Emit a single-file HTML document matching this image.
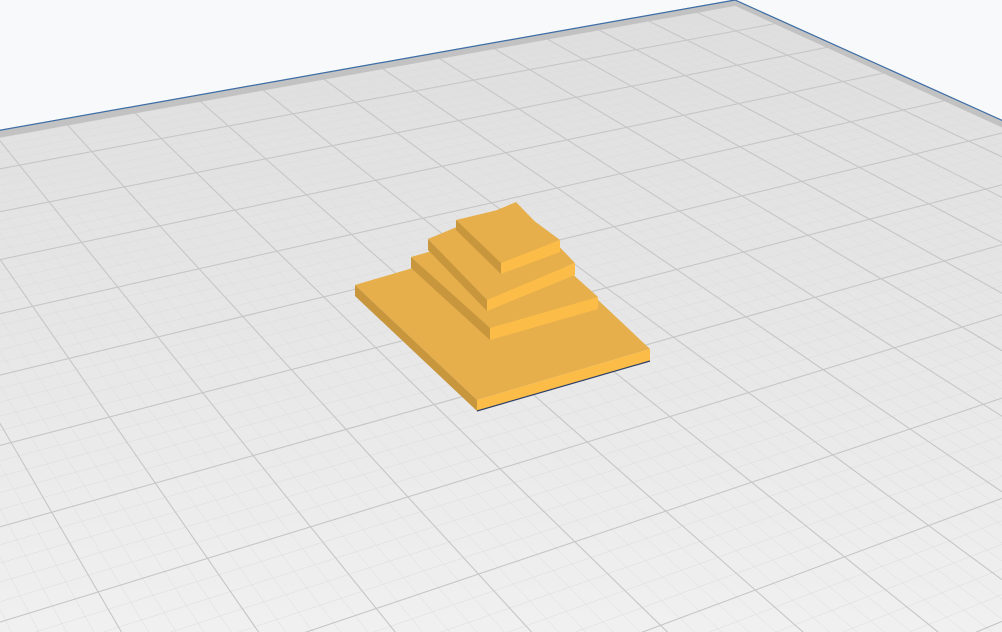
<!DOCTYPE html>
<html><head><meta charset="utf-8"><style>
html,body{margin:0;padding:0;background:#f8f9fa;overflow:hidden;width:1002px;height:632px}
svg{display:block}
</style></head><body>
<svg id="s" width="1002" height="632" viewBox="0 0 1002 632" xmlns="http://www.w3.org/2000/svg">
<defs>
<linearGradient id="pg" gradientUnits="userSpaceOnUse" x1="0" y1="0" x2="0" y2="632">
<stop offset="0" stop-color="#dedede"/><stop offset="0.5" stop-color="#e6e6e6"/><stop offset="1" stop-color="#f0f0f0"/>
</linearGradient>
</defs>
<rect width="1002" height="632" fill="#f8f9fa"/>
<g id="plate"></g>
<g id="obj">
<polygon points="355,285 528,234 650,349 477,400" fill="#e6af4b"/>
<polygon points="355,285 477,400 477,411 355,296" fill="#c8963d"/>
<polygon points="477,400 650,349 650,361 477,411" fill="#fcbd48"/>
<polyline points="477,411 650,361" fill="none" stroke="#2d3f66" stroke-width="1.2"/>
<polygon points="411,257 519,226 598,297 490,328" fill="#e6af4b"/>
<polygon points="411,257 490,328 490,340 411,268" fill="#c8963d"/>
<polygon points="490,328 598,297 598,309 490,340" fill="#fcbd48"/>
<polygon points="428,239 516,202 575,263 487,300" fill="#e6af4b"/>
<polygon points="428,239 487,300 487,311 428,250" fill="#c8963d"/>
<polygon points="487,300 575,263 575,275 487,311" fill="#fcbd48"/>
<polygon points="456,220 514,206 560,240 501,263" fill="#e6af4b"/>
<polygon points="456,220 501,263 501,274 456,230" fill="#c8963d"/>
<polygon points="501,263 560,240 560,252 501,274" fill="#fcbd48"/>
</g>
</svg>
<script>
(function(){
var O=[735,0],V1=[3800,-543],V2=[-596,-600],s1=0.0150,s2=0.0353,WM=0.03;
function P(u,v){var w=1+u*s1+v*s2;return[(O[0]+u*s1*V1[0]+v*s2*V2[0])/w,(O[1]+u*s1*V1[1]+v*s2*V2[1])/w];}
function f(p){return p[0].toFixed(1)+' '+p[1].toFixed(1);}
function c(p){return p[0].toFixed(1)+','+p[1].toFixed(1);}
var U0=-60,V0=-27;
function vmin(u){return Math.max((WM-1-u*s1)/s2,V0);}
function umin(v){return Math.max((WM-1-v*s2)/s1,U0);}
var g=document.getElementById('plate'),h='';
var pts=[];
for(var u=umin(0);u<=0;u+=0.5)pts.push(P(u,0));
pts.push(P(0,0));
for(var v=0;v>=vmin(0);v-=0.5)pts.push(P(0,v));
pts.push([5000,5000]);pts.push([-5000,5000]);
h+='<polygon points="'+pts.map(c).join(' ')+'" fill="url(#pg)"/>';
function lines(step,col,wd){
 var d='';
 for(var i=0;i>=U0;i-=step){var vm=vmin(i);if(vm>=0)continue;d+='M'+f(P(i,0))+'L'+f(P(i,vm));}
 for(var j=0;j>=V0;j-=step){var um=umin(j);if(um>=0)continue;d+='M'+f(P(0,j))+'L'+f(P(um,j));}
 return '<path d="'+d+'" stroke="'+col+'" stroke-width="'+wd+'" fill="none"/>';
}
h+=lines(0.2,'#dcdcdc',0.5);
h+=lines(1,'#c6c6c6',1.1);
var t=0.2,a=[],b=[];
for(var u=umin(-t);u<=0;u+=0.5)a.push(P(u,0));
a.push(P(0,0));a.push(P(0,-t));
for(var u=0;u>=umin(-t);u-=0.5)a.push(P(u,-t));
h+='<polygon points="'+a.map(c).join(' ')+'" fill="#c2c2c2"/>';
b.push(P(0,0));b.push(P(0,vmin(-t)));b.push(P(-t,vmin(-t)));b.push(P(-t,0));
h+='<polygon points="'+b.map(c).join(' ')+'" fill="#c2c2c2"/>';
h+='<polyline points="'+c(P(umin(0),0))+' '+c(P(0,0))+' '+c(P(0,vmin(0)))+'" fill="none" stroke="#3d6ea6" stroke-width="1.2"/>';
g.innerHTML=h;
})();
</script>
</body></html>
